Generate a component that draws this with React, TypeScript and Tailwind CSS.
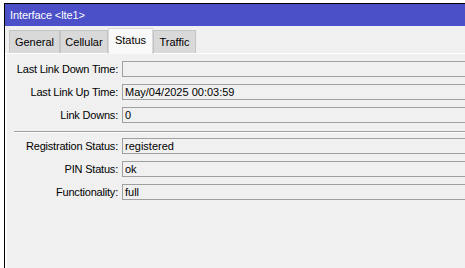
import React from "react";

const tabs = [
  { name: "General", w: "w-[51px]" },
  { name: "Cellular", w: "w-[48px]" },
  { name: "Status", w: "w-[45px]", active: true },
  { name: "Traffic", w: "w-[43px]" },
];

const Field = ({ label, value }: { label: string; value: string }) => (
  <div className="flex items-center h-4 leading-4">
    <div className="w-[111px] shrink-0 text-right whitespace-nowrap tracking-[-0.2px]">{label}</div>
    <div className="ml-[4px] h-4 flex-1 border border-[#a0a0a0] bg-[#f0f0f0] pl-[2px] leading-[14px] whitespace-nowrap">
      {value}
    </div>
  </div>
);

export default function App() {
  return (
    <div className="w-[465px] h-[268px] bg-white pt-[3px] pl-[4px] overflow-hidden font-['Liberation_Sans',Arial,sans-serif] text-[11px] text-black">
      <div className="w-[520px] h-[300px] border-l border-t border-black bg-[#f0f0f0] flex flex-col">
        <div className="h-[22px] bg-[#4b50c9] text-white flex items-center pl-[5px] tracking-[-0.1px]">Interface &lt;lte1&gt;</div>

        <div className="h-[27px] flex items-end pl-[4px]">
          {tabs.map((t) =>
            t.active ? (
              <div
                key={t.name}
                className={`${t.w} h-[26px] bg-[#f9f9f9] border-t border-l border-r border-[#d9d9d9] flex items-center justify-center pb-[2px] relative top-[1px]`}
              >
                {t.name}
              </div>
            ) : (
              <div
                key={t.name}
                className={`${t.w} h-[23px] bg-[#d9d9d9] border-t border-l border-r border-[#c4c4c4] flex items-center justify-center`}
              >
                {t.name}
              </div>
            )
          )}
        </div>

        <div className="flex-1 border-t border-white border-l-2 border-l-white pt-[7px]">
          <div className="flex flex-col gap-[7px]">
            <Field label="Last Link Down Time:" value="" />
            <Field label="Last Link Up Time:" value="May/04/2025 00:03:59" />
            <Field label="Link Downs:" value="0" />
          </div>

          <div className="ml-[7px] mt-[8px] border-t border-[#a0a0a0] border-b border-b-white" />

          <div className="flex flex-col gap-[7px] mt-[5px]">
            <Field label="Registration Status:" value="registered" />
            <Field label="PIN Status:" value="ok" />
            <Field label="Functionality:" value="full" />
          </div>
        </div>
      </div>
    </div>
  );
}
